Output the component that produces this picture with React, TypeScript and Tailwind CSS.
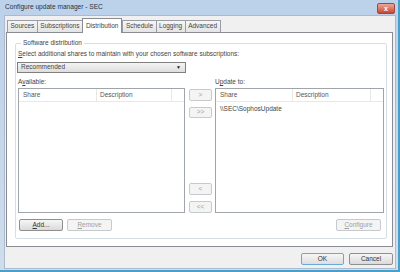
import React from 'react';

const font = { fontFamily: '"Liberation Sans", Arial, sans-serif' };

function Btn({ children, disabled = false, primary = false, className = '' }: { children: React.ReactNode; disabled?: boolean; primary?: boolean; className?: string }) {
    return (
        <div
            className={`flex shrink-0 items-center justify-center rounded-[2px] border text-[6.5px] leading-none ${
                disabled
                    ? 'border-[#c6cacd] bg-[#f4f4f4] text-[#a0a0a0]'
                    : primary
                      ? 'border-[#6aa9d6] bg-gradient-to-b from-[#f6f6f6] to-[#dedede] text-[#333]'
                      : 'border-[#8f8f8f] bg-gradient-to-b from-[#f6f6f6] to-[#dadada] text-[#333]'
            } ${className}`}
        >
            {children}
        </div>
    );
}

function Tab({ label, active = false }: { label: string; active?: boolean }) {
    return active ? (
        <div className="relative z-10 -mb-[1px] flex h-[15px] items-center border border-b-0 border-[#898c95] bg-white px-[3px]">
            {label}
        </div>
    ) : (
        <div className="flex h-[12px] items-center border border-b-0 border-r-0 border-[#9a9da5] bg-gradient-to-b from-[#f6f6f6] to-[#e4e4e4] px-[2.5px] last:border-r">
            {label}
        </div>
    );
}

function ListBox({ desc, rows = [] }: { desc: number; rows?: string[] }) {
    return (
        <div className="flex h-[125px] flex-col border border-[#a0a5ab] bg-white">
            <div className="flex h-[13px] shrink-0 border-b border-[#e8e8e8] text-[#555]">
                <div className="flex items-center border-r border-[#e8e8e8] pl-[4px]" style={{ width: desc }}>
                    Share
                </div>
                <div className="flex flex-1 items-center border-r border-[#e8e8e8] pl-[3px]">Description</div>
                <div className="w-[12px]" />
            </div>
            <div className="flex flex-col pt-[1px]">
                {rows.map((r) => (
                    <div key={r} className="flex h-[12px] items-center pl-[4px] text-[#444]">
                        {r}
                    </div>
                ))}
            </div>
        </div>
    );
}

export default function App() {
    return (
        <div style={font} className="flex h-[272px] w-[400px] flex-col overflow-hidden border-r-[2px] border-b-[2px] border-[#4a9fca] bg-gradient-to-b from-[#bcd1ea] to-[#d0ddec] text-[6.5px] leading-none text-[#444]">
            {/* Title bar */}
            <div className="flex h-[15px] shrink-0 items-center justify-between pl-[5px] pr-[3px]">
                <span className="text-[6.6px] text-[#2a3440]">Configure update manager - SEC</span>
                <div className="mt-[2px] flex h-[11px] w-[18px] items-center justify-center rounded-[2px] border border-[#9a4a40] bg-gradient-to-b from-[#e9a89b] to-[#c8452f] text-[7px] font-bold text-white">
                    x
                </div>
            </div>

            {/* Client area */}
            <div className="mb-[1px] ml-[4px] mr-[2px] flex flex-1 flex-col border border-[#aabbd0] bg-[#f0f0f0]">
                {/* Tabs */}
                <div className="flex shrink-0 items-end pl-[2px] pt-[2px] text-[#444]">
                    <Tab label="Sources" />
                    <Tab label="Subscriptions" />
                    <Tab label="Distribution" active />
                    <Tab label="Schedule" />
                    <Tab label="Logging" />
                    <Tab label="Advanced" />
                </div>

                {/* Tab panel */}
                <div className="ml-[1px] mr-[2px] flex h-[215px] shrink-0 flex-col border border-[#898c95] bg-white pb-[7px] pl-[8px] pr-[5px] pt-[7px]">
                    <fieldset className="flex flex-1 flex-col rounded-[2px] border border-[#d5dfe5] px-[2px] pb-[6px]">
                        <legend className="ml-[3px] px-[2px] text-[#444]">Software distribution</legend>
                        <div className="mt-[4px]">
                            <span className="underline">S</span>elect additional shares to maintain with your chosen software subscriptions:
                        </div>
                        <div className="-ml-[1px] mt-[5px] flex h-[11px] w-[169px] items-center justify-between border border-[#7f7f7f] bg-gradient-to-b from-[#f4f4f4] to-[#dedede] pl-[3px] pr-[4px]">
                            <span>Recommended</span>
                            <span className="text-[5px] text-[#222]">▼</span>
                        </div>

                        <div className="mt-[6px] flex">
                            <div className="flex w-[167px] flex-col">
                                <div className="mb-[2px] h-[7px]">
                                    A<span className="underline">v</span>ailable:
                                </div>
                                <ListBox desc={78} />
                            </div>
                            <div className="ml-[4px] flex w-[23px] flex-col pt-[10px]">
                                <Btn disabled className="h-[12px]">&gt;</Btn>
                                <Btn disabled className="mt-[6px] h-[11px]">&gt;&gt;</Btn>
                                <Btn disabled className="mt-[65px] h-[12px]">&lt;</Btn>
                                <Btn disabled className="mt-[6px] h-[12px]">&lt;&lt;</Btn>
                            </div>
                            <div className="ml-[3px] flex w-[169px] flex-col">
                                <div className="mb-[2px] h-[7px]">
                                    U<span className="underline">p</span>date to:
                                </div>
                                <ListBox desc={77} rows={['\\\\SEC\\SophosUpdate']} />
                            </div>
                        </div>

                        <div className="mt-[6px] flex items-center pl-[1px] pr-[3px]">
                            <Btn className="h-[12px] w-[44px]">
                                <span className="underline">A</span>dd...
                            </Btn>
                            <Btn disabled className="ml-[4px] h-[12px] w-[45px]">
                                <span className="underline">R</span>emove
                            </Btn>
                            <div className="flex-1" />
                            <Btn disabled className="h-[12px] w-[45px]">
                                <span className="underline">C</span>onfigure
                            </Btn>
                        </div>
                    </fieldset>
                </div>

                {/* Dialog buttons */}
                <div className="mt-[6px] flex justify-end gap-[5px] pr-[2px]">
                    <Btn primary className="h-[12px] w-[43px]">OK</Btn>
                    <Btn className="h-[12px] w-[44px]">Cancel</Btn>
                </div>
            </div>
        </div>
    );
}
